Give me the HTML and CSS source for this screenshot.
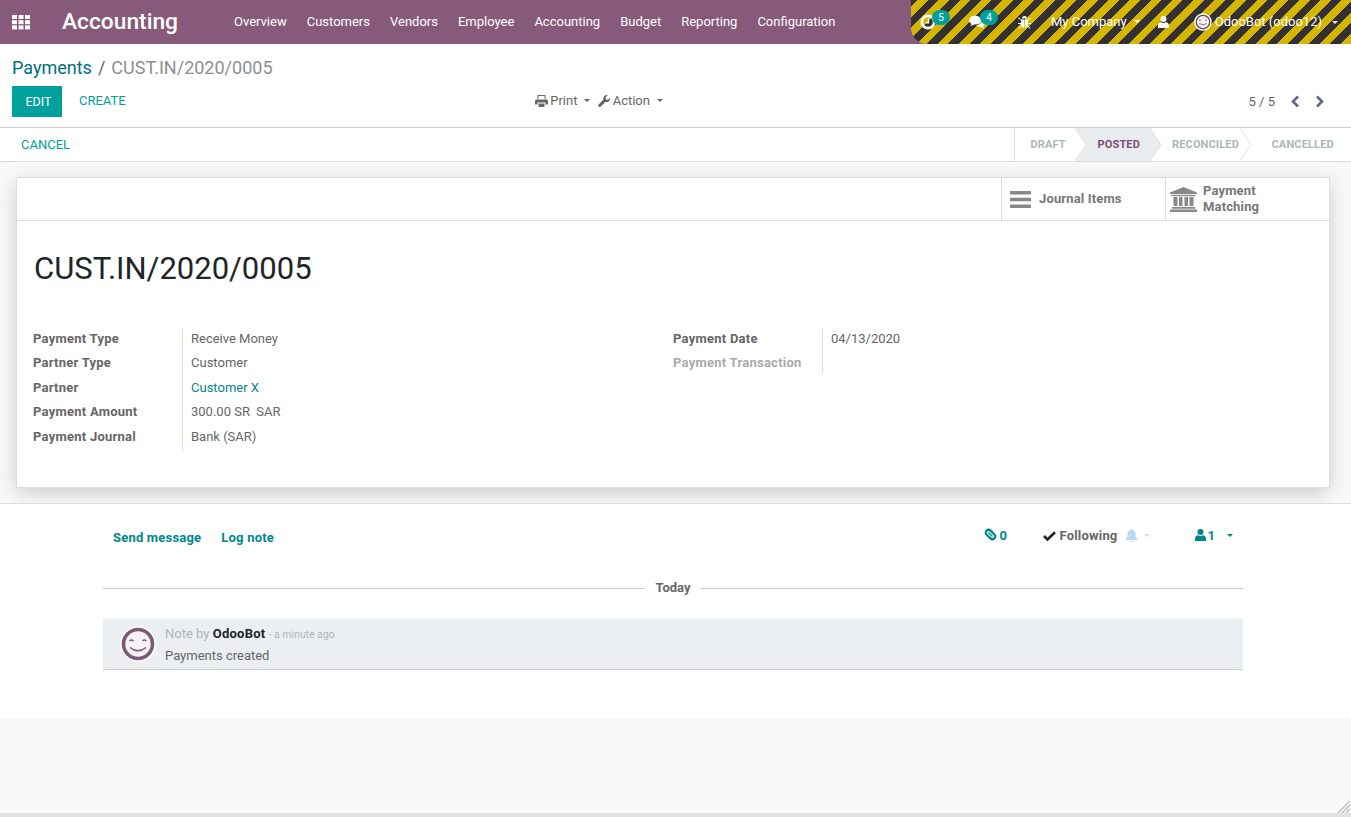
FILE: index.html

```html
<!DOCTYPE html>
<html lang="en">
<head>
    <meta charset="UTF-8">
    <meta name="viewport" content="width=device-width, initial-scale=1.0">
    <title>Payments - Accounting</title>
    <link rel="stylesheet" href="styles.css">
</head>
<body>
    <!-- Top bar -->
    <header class="navbar">
        <svg class="apps-icon" width="19" height="15" viewBox="0 0 19 15" fill="#fff">
            <rect x="0" y="0" width="5" height="4"/><rect x="6.5" y="0" width="5" height="4"/><rect x="13" y="0" width="5" height="4"/>
            <rect x="0" y="5.2" width="5" height="4"/><rect x="6.5" y="5.2" width="5" height="4"/><rect x="13" y="5.2" width="5" height="4"/>
            <rect x="0" y="10.4" width="5" height="4"/><rect x="6.5" y="10.4" width="5" height="4"/><rect x="13" y="10.4" width="5" height="4"/>
        </svg>
        <span class="brand">Accounting</span>
        <nav class="menu">
            <a>Overview</a>
            <a>Customers</a>
            <a>Vendors</a>
            <a>Employee</a>
            <a>Accounting</a>
            <a>Budget</a>
            <a>Reporting</a>
            <a>Configuration</a>
        </nav>
        <div class="systray">
            <span class="tray-item tray-activity">
                <svg width="16" height="16" viewBox="0 0 16 16" fill="none" stroke="#fff" stroke-width="2.800"><circle cx="8" cy="8" r="6.2"/><path d="M8.500 4.500v4.200H5.800" stroke-width="1.400"/></svg>
                <span class="badge">5</span>
            </span>
            <span class="tray-item tray-chat">
                <svg width="16" height="14" viewBox="0 0 17 15" fill="#fff"><ellipse cx="6.500" cy="5.500" rx="6.500" ry="4.800"/><path d="M3 8.500 1.500 12 7 9.500z"/><path d="M13.500 5.500c2 .8 3.500 2.200 3.500 3.800 0 1.300-.9 2.400-2.200 3.100l1 2.100-3.400-1.600c-2 0-3.800-.6-4.800-1.700 3.700-.1 6.400-2.700 5.900-5.700z"/></svg>
                <span class="badge">4</span>
            </span>
            <svg class="bug" width="13" height="14" viewBox="0 0 13 14" fill="#fff"><path d="M4 3.500a2.500 2.500 0 0 1 5 0z"/><path d="M3 4.500h3.100V13C4.200 12.800 3 11.300 3 9.500zM6.900 4.500H10v5c0 1.800-1.200 3.300-3.100 3.500z"/><path d="M0 3l.8-.6L3 4.500l-.6.700zM13 3l-.8-.6L10 4.500l.6.700zM0 8h3v1H0zM10 8h3v1h-3zM.5 13.200l2.400-2.800.7.6-2.400 2.800zM12.500 13.200l-2.400-2.800-.7.6 2.400 2.800z"/></svg>
            <span class="company">My Company<i class="caret"></i></span>
            <svg class="user-icon" width="11" height="12" viewBox="0 0 11 12" fill="#fff"><circle cx="5.500" cy="3" r="3"/><path d="M0 12V9.500C0 7.500 1.500 6.500 3 6.300c1.500 1 3.500 1 5 0 1.500.2 3 1.200 3 3.200V12z"/></svg>
            <span class="account">
                <svg width="18" height="18" viewBox="0 0 36 36"><circle cx="18" cy="18" r="17.500" fill="#fff"/><circle cx="18" cy="18" r="13.500" fill="#f4f0f3" stroke="#5d4a58" stroke-width="2.500"/><path d="M10 15q2-2 4 0M22 15q2-2 4 0M11 21q7 6 14 0" fill="none" stroke="#7c5a75" stroke-width="1.800"/></svg>
                OdooBot (odoo12)<i class="caret"></i>
            </span>
        </div>
    </header>

    <!-- Control panel -->
    <section class="control-panel">
        <div class="breadcrumb"><a>Payments</a><span class="sep">/</span><span class="current">CUST.IN/2020/0005</span></div>
        <div class="cp-row">
            <div class="cp-buttons">
                <button class="btn-primary">EDIT</button>
                <button class="btn-link">CREATE</button>
            </div>
            <div class="cp-sidebar">
                <span class="dropdown">
                    <svg width="13" height="12" viewBox="0 0 13 12" fill="#666"><path d="M2.500 0h8v4h-1V1h-6v3h-1z"/><path d="M1.500 4.500h10c.8 0 1.500.7 1.500 1.500v3.500h-2.500V7.500h-8v2H0V6c0-.8.7-1.500 1.500-1.500z"/><path d="M3.500 8.500h6V12h-6z"/></svg>
                    Print<i class="caret caret-dark"></i>
                </span>
                <span class="dropdown">
                    <svg width="12" height="12" viewBox="0 0 13 13" fill="#666"><path d="M12.800 3.200c.4 1.500-.1 3-1.300 3.800-1 .7-2.200.8-3.200.4L3 12.500c-.7.700-1.700.7-2.300 0-.7-.6-.7-1.600 0-2.300l5.100-5.100c-.5-1.500 0-3.100 1.200-4.100C8 .2 9.300-.1 10.500.3L8.200 2.600l.5 2 2 .6z"/></svg>
                    Action<i class="caret caret-dark"></i>
                </span>
            </div>
            <div class="pager">
                <span>5 / 5</span>
                <svg width="10" height="13" viewBox="0 0 10 13" fill="none" stroke="#5f6a80" stroke-width="2.600"><path d="M8 1.500 3 6.500l5 5"/></svg>
                <svg width="10" height="13" viewBox="0 0 10 13" fill="none" stroke="#5f6a80" stroke-width="2.600"><path d="M2 1.500l5 5-5 5"/></svg>
            </div>
        </div>
    </section>

    <!-- Status bar -->
    <section class="statusbar">
        <button class="btn-link btn-cancel">CANCEL</button>
        <div class="steps">
            <span class="step step-draft">DRAFT</span>
            <span class="step step-posted">POSTED</span>
            <span class="step step-reconciled">RECONCILED</span>
            <span class="step step-cancelled">CANCELLED</span>
            <svg class="step-arrows" width="316" height="33" viewBox="0 0 316 33" fill="none">
                <path d="M59 0h76l11 16.500L135 33H59l11-16.500z" fill="#e9ecef"/>
                <path d="M135 0l11 16.500L135 33" stroke="#dee2e6"/>
                <path d="M225 0l11 16.500L225 33" stroke="#dee2e6"/>
            </svg>
        </div>
    </section>

    <!-- Form sheet -->
    <main class="sheet-bg">
        <article class="sheet">
            <div class="button-box">
                <div class="stat-button stat-journal">
                    <svg width="21" height="17" viewBox="0 0 21 17" fill="#888"><rect width="21" height="3.400" y="0" rx=".5"/><rect width="21" height="3.400" y="6.800" rx=".5"/><rect width="21" height="3.400" y="13.600" rx=".5"/></svg>
                    <span>Journal Items</span>
                </div>
                <div class="stat-button stat-matching">
                    <svg width="27" height="25" viewBox="0 0 27 25" fill="#888"><path d="M13.500 0 27 5.500V7H0V5.500z"/><path d="M1.500 7.800h24v1.400h-24z"/><path d="M3.500 10h4v9h-4zM9 10h3.500v9H9zM14.500 10H18v9h-3.500zM19.500 10h4v9h-4z"/><path d="M2 20h23v1.800H2zM0 22.500h27V25H0z"/></svg>
                    <span>Payment<br>Matching</span>
                </div>
            </div>
            <div class="sheet-body">
                <h1 class="record-title">CUST.IN/2020/0005</h1>
                <div class="form-groups">
                    <dl class="group">
                        <dt>Payment Type</dt><dd>Receive Money</dd>
                        <dt>Partner Type</dt><dd>Customer</dd>
                        <dt>Partner</dt><dd><a>Customer X</a></dd>
                        <dt>Payment Amount</dt><dd>300.00 SR&nbsp; SAR</dd>
                        <dt>Payment Journal</dt><dd>Bank (SAR)</dd>
                    </dl>
                    <dl class="group">
                        <dt>Payment Date</dt><dd>04/13/2020</dd>
                        <dt class="muted">Payment Transaction</dt><dd class="empty"></dd>
                    </dl>
                </div>
            </div>
        </article>
    </main>

    <!-- Chatter -->
    <section class="chatter">
        <div class="chatter-top">
            <div class="chatter-tabs">
                <a>Send message</a>
                <a>Log note</a>
            </div>
            <div class="chatter-tools">
                <span class="tool tool-attach">
                    <svg width="13" height="13" viewBox="0 0 13 13" fill="none" stroke="#00868b" stroke-width="2.200"><rect x="-2.800" y="-5.500" width="5.600" height="11" rx="2.800" transform="translate(6.500 6.500) rotate(-45)"/><path d="M4.500 4.500l4 4" stroke-width="1.200"/></svg>
                    0
                </span>
                <span class="tool tool-follow">
                    <svg width="13" height="10" viewBox="0 0 13 10" fill="none" stroke="#222" stroke-width="2.600"><path d="M1 5l3.500 3.500L12 1.200"/></svg>
                    Following
                    <svg class="bell" width="13" height="13" viewBox="0 0 13 13" fill="#b9d9ef"><path d="M6.500 0c.6 0 1 .4 1 .9 2 .4 3 2 3 4 0 2.500.6 3.800 2 5.100v1H.5v-1c1.400-1.300 2-2.600 2-5.100 0-2 1-3.600 3-4C5.500.4 5.900 0 6.500 0zM5 12h3a1.500 1.500 0 0 1-3 0z"/></svg>
                    <i class="caret caret-light"></i>
                </span>
                <span class="tool tool-people">
                    <svg width="11" height="12" viewBox="0 0 11 12" fill="#00868b"><circle cx="5.500" cy="3" r="3"/><path d="M0 12V9.500C0 7.500 1.500 6.500 3 6.300c1.500 1 3.500 1 5 0 1.500.2 3 1.200 3 3.200V12z"/></svg>
                    1
                    <i class="caret caret-teal"></i>
                </span>
            </div>
        </div>
        <div class="today"><span>Today</span></div>
        <div class="message">
            <svg class="avatar" width="36" height="36" viewBox="0 0 36 36"><circle cx="18" cy="18" r="18" fill="#fff"/><circle cx="18" cy="18" r="14.500" fill="#f6f2f5" stroke="#7c5a75" stroke-width="3.600"/><path d="M9.500 15q2-2 4 0M22.500 15q2-2 4 0M10 21.500q8 6.500 16 0" fill="none" stroke="#7c5a75" stroke-width="1.500"/></svg>
            <div class="message-text">
                <div class="message-head">Note by <b>OdooBot</b> <small>- a minute ago</small></div>
                <div class="message-body">Payments created</div>
            </div>
        </div>
    </section>

    <!-- Resize grip of the window -->
    <footer class="window-foot">
        <svg class="grip" width="13" height="13" viewBox="0 0 13 13" stroke="#b5b5b5" stroke-width="1.200"><path d="M1 13 13 1M5 13l8-8M9 13l4-4"/></svg>
    </footer>
</body>
</html>
```

FILE: styles.css

```css
* {
    box-sizing: border-box;
}

html, body {
    height: 100%;
}

body {
    margin: 0;
    font-family: Roboto, "Liberation Sans", sans-serif;
    font-size: 13px;
    line-height: 18px;
    color: #666;
    background-color: #f9f9f9;
    display: flex;
    flex-direction: column;
    overflow: hidden;
}

a {
    color: #00868b;
    text-decoration: none;
}

button {
    font-family: inherit;
    font-size: 13px;
    border: none;
    cursor: pointer;
}

/* Top bar */
.navbar {
    flex: none;
    height: 44px;
    background-color: #875a7b;
    color: #fff;
    display: flex;
    align-items: center;
}

.apps-icon {
    margin-left: 12px;
}

.brand {
    margin-left: 31px;
    width: 172px;
    font-size: 22.75px;
    font-weight: 500;
}

.menu {
    display: flex;
    gap: 20px;
    flex: 1;
}

.menu a {
    color: #fff;
}

.systray {
    width: 440px;
    height: 44px;
    display: flex;
    align-items: center;
    position: relative;
    border-bottom-left-radius: 16px;
    background-image: repeating-linear-gradient(-45deg, #d4b500 0, #d4b500 7.500px, #353030 7.500px, #353030 15px);
}

.tray-item {
    position: relative;
    display: flex;
}

.tray-activity {
    margin-left: 9px;
}

.tray-chat {
    margin-left: 33px;
}

.badge {
    position: absolute;
    left: 11px;
    top: -5px;
    width: 18px;
    height: 15px;
    border-radius: 8px;
    background-color: #00a09d;
    color: #fff;
    font-size: 10px;
    line-height: 15px;
    text-align: center;
}

.tray-activity .badge {
    left: 12px;
    top: -4px;
}

.bug {
    margin-left: 33px;
}

.company {
    margin-left: 20px;
}

.user-icon {
    margin-left: 18px;
}

.account {
    margin-left: 25px;
    display: flex;
    align-items: center;
    gap: 3px;
    white-space: nowrap;
}

.caret {
    display: inline-block;
    width: 0;
    height: 0;
    margin-left: 7px;
    vertical-align: 3px;
    border-top: 3px solid #fff;
    border-left: 3px solid transparent;
    border-right: 3px solid transparent;
}

.caret-dark {
    border-top-color: #666;
}

.caret-light {
    border-top-color: #c5dff0;
    margin-left: 3px;
}

.caret-teal {
    border-top-color: #00868b;
    margin-left: 8px;
}

/* Control panel */
.control-panel {
    flex: none;
    height: 84px;
    background-color: #fff;
    border-bottom: 1px solid #ccc;
    padding: 12px 16px 0 12px;
}

.breadcrumb {
    font-size: 18px;
    line-height: 24px;
    color: #8f8f8f;
    height: 30px;
}

.breadcrumb a {
    color: #00707a;
}

.sep {
    margin: 0 6px;
    color: #666;
}

.cp-row {
    display: flex;
    align-items: center;
    height: 31px;
}

.cp-buttons {
    width: 500px;
    display: flex;
    align-items: center;
}

.btn-primary {
    width: 50px;
    height: 31px;
    padding: 0 0 0 3px;
    font-size: 12.500px;
    background-color: #00a09d;
    color: #fff;
}

.btn-link {
    background: none;
    color: #00a09d;
    padding: 0;
}

.cp-buttons .btn-link {
    margin-left: 17px;
    margin-top: -2px;
}

.cp-sidebar {
    flex: 1;
    display: flex;
    gap: 8px;
    margin-left: 23px;
    margin-top: -1px;
}

.dropdown svg {
    vertical-align: -2px;
    margin-right: -1px;
}

.pager {
    display: flex;
    align-items: center;
    gap: 14px;
    margin-right: 10px;
    color: #666;
}

.pager span {
    margin-right: 1px;
}

.pager svg + svg {
    margin-left: 1px;
}

/* Status bar */
.statusbar {
    flex: none;
    height: 34px;
    background-color: #fff;
    border-bottom: 1px solid #ddd;
    display: flex;
    justify-content: space-between;
}

.btn-cancel {
    margin-left: 21px;
    height: 33px;
}

.steps {
    position: relative;
    width: 337px;
    height: 33px;
    border-left: 1px solid #dee2e6;
    font-size: 11px;
    font-weight: 700;
    letter-spacing: 0.15px;
    line-height: 33px;
    color: #adb5bd;
}

.step {
    position: absolute;
    top: 0;
    z-index: 1;
}

.step-draft {
    left: 15.500px;
}

.step-posted {
    left: 82.500px;
    color: #7c4f72;
}

.step-reconciled {
    left: 157px;
}

.step-cancelled {
    left: 256.500px;
}

.step-arrows {
    position: absolute;
    left: 0;
    top: 0;
}

/* Form sheet */
.sheet-bg {
    flex: none;
    height: 341px;
    background-color: #f9f9f9;
    padding: 15px 21px 0 16px;
}

.sheet {
    height: 311px;
    background-color: #fff;
    border: 1px solid #ddd;
    box-shadow: 0 5px 20px -1px rgba(0, 0, 0, 0.2);
}

.button-box {
    height: 43px;
    display: flex;
    justify-content: flex-end;
    border-bottom: 1px solid #ddd;
    font-weight: 700;
    letter-spacing: 0.15px;
    color: #777;
    line-height: 16px;
}

.stat-button {
    width: 164px;
    height: 42px;
    display: flex;
    align-items: center;
    border-left: 1px solid #ddd;
}

.stat-journal {
    gap: 8px;
    padding-left: 8px;
}

.stat-matching {
    gap: 6px;
    padding-left: 4px;
}

.sheet-body {
    padding: 27px 16px 0;
}

.record-title {
    margin: 0 0 38.600px 1px;
    font-size: 31px;
    line-height: 42px;
    font-weight: 400;
    color: #212529;
}

.form-groups {
    display: grid;
    grid-template-columns: 640px 1fr;
}

.group {
    margin: 0;
    display: grid;
    grid-template-columns: 149px 1fr;
    align-content: start;
}

.group dt {
    font-weight: 700;
    letter-spacing: 0.25px;
    color: #666;
    height: 24.500px;
    padding-top: 1px;
}

.group dt.muted {
    color: #aaa;
}

.group dd {
    margin: 0;
    height: 24.500px;
    padding: 1px 0 0 8px;
    border-left: 1px solid #ddd;
}

.group dd.empty {
    height: 20px;
}

/* Chatter */
.chatter {
    flex: none;
    height: 215px;
    background-color: #fff;
    border-top: 1px solid #ddd;
    padding: 0 108px 0 103px;
}

.chatter-top {
    height: 56px;
    display: flex;
    justify-content: space-between;
    align-items: center;
    font-weight: 700;
    letter-spacing: 0.2px;
}

.chatter-tabs {
    display: flex;
    gap: 20px;
    margin-left: 10px;
    padding-top: 11px;
}

.chatter-tools {
    position: relative;
    display: flex;
    align-items: center;
    padding-top: 8px;
    margin-right: 1px;
    color: #666;
}

.tool-attach {
    color: #00868b;
    width: 59px;
}

.tool-attach svg {
    margin-right: -1px;
}

.tool-follow {
    width: 152px;
}

.bell {
    margin-left: 4px;
    vertical-align: -2px;
}

.tool-people {
    color: #00868b;
    width: 47px;
}

.tool-people svg {
    margin-right: -2px;
}

.tool svg:first-child {
    vertical-align: -1px;
}

.today {
    height: 20px;
    margin-top: 18px;
    display: flex;
    align-items: center;
    gap: 10px;
    font-weight: 700;
}

.today::before, .today::after {
    content: "";
    flex: 1;
    border-top: 1px solid #ccc;
}

.message {
    height: 51px;
    margin-top: 21px;
    display: flex;
    background-color: #ebeff2;
    border-bottom: 1px solid #ccd0d4;
}

.avatar {
    margin: 7px 0 0 17px;
}

.message-text {
    margin-left: 9px;
    padding-top: 6px;
}

.message-head {
    color: #adb5bd;
}

.message-head b {
    color: #212529;
    font-weight: 700;
    letter-spacing: 0.25px;
}

.message-head small {
    font-size: 10px;
    letter-spacing: 0.2px;
}

.message-body {
    margin-top: 3px;
}

/* Window edge */
.window-foot {
    flex: 1;
    position: relative;
    background-color: #f9f9f9;
    border-bottom: 4px solid #e2e2e2;
}

.grip {
    position: absolute;
    right: 1px;
    bottom: 0;
}
```
